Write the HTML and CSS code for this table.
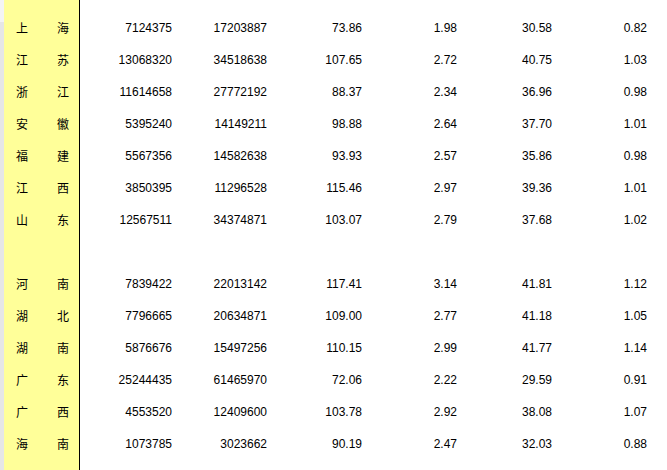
FILE: index.html
```html
<!DOCTYPE html>
<html lang="zh">
<head>
<meta charset="utf-8">
<title>Sheet</title>
<link rel="stylesheet" href="styles.css">
</head>
<body>
<div class="sheet">
  <div class="gutter"></div>
  <div class="names">
    <div class="name"><span>上</span><span>海</span></div>
    <div class="name"><span>江</span><span>苏</span></div>
    <div class="name"><span>浙</span><span>江</span></div>
    <div class="name"><span>安</span><span>徽</span></div>
    <div class="name"><span>福</span><span>建</span></div>
    <div class="name"><span>江</span><span>西</span></div>
    <div class="name"><span>山</span><span>东</span></div>
    <div class="name"></div>
    <div class="name"><span>河</span><span>南</span></div>
    <div class="name"><span>湖</span><span>北</span></div>
    <div class="name"><span>湖</span><span>南</span></div>
    <div class="name"><span>广</span><span>东</span></div>
    <div class="name"><span>广</span><span>西</span></div>
    <div class="name"><span>海</span><span>南</span></div>
  </div>
  <div class="data">
    <div class="row"><span>7124375</span><span>17203887</span><span>73.86</span><span>1.98</span><span>30.58</span><span>0.82</span></div>
    <div class="row"><span>13068320</span><span>34518638</span><span>107.65</span><span>2.72</span><span>40.75</span><span>1.03</span></div>
    <div class="row"><span>11614658</span><span>27772192</span><span>88.37</span><span>2.34</span><span>36.96</span><span>0.98</span></div>
    <div class="row"><span>5395240</span><span>14149211</span><span>98.88</span><span>2.64</span><span>37.70</span><span>1.01</span></div>
    <div class="row"><span>5567356</span><span>14582638</span><span>93.93</span><span>2.57</span><span>35.86</span><span>0.98</span></div>
    <div class="row"><span>3850395</span><span>11296528</span><span>115.46</span><span>2.97</span><span>39.36</span><span>1.01</span></div>
    <div class="row"><span>12567511</span><span>34374871</span><span>103.07</span><span>2.79</span><span>37.68</span><span>1.02</span></div>
    <div class="row"></div>
    <div class="row"><span>7839422</span><span>22013142</span><span>117.41</span><span>3.14</span><span>41.81</span><span>1.12</span></div>
    <div class="row"><span>7796665</span><span>20634871</span><span>109.00</span><span>2.77</span><span>41.18</span><span>1.05</span></div>
    <div class="row"><span>5876676</span><span>15497256</span><span>110.15</span><span>2.99</span><span>41.77</span><span>1.14</span></div>
    <div class="row"><span>25244435</span><span>61465970</span><span>72.06</span><span>2.22</span><span>29.59</span><span>0.91</span></div>
    <div class="row"><span>4553520</span><span>12409600</span><span>103.78</span><span>2.92</span><span>38.08</span><span>1.07</span></div>
    <div class="row"><span>1073785</span><span>3023662</span><span>90.19</span><span>2.47</span><span>32.03</span><span>0.88</span></div>
  </div>
</div>
</body>
</html>
```
FILE: styles.css
```css
html, body {
  margin: 0;
  padding: 0;
  background: #ffffff;
}
.sheet {
  display: flex;
  height: 470px;
  overflow: hidden;
  font-family: "Liberation Sans", Arial, "Noto Sans CJK SC", sans-serif;
  font-size: 12px;
  color: #000;
}
.gutter {
  width: 4px;
  flex: none;
  background: linear-gradient(#f4f4f4 0 22px, #e6e6e6 22px);
}
.names {
  width: 75px;
  flex: none;
  background: #ffff99;
  border-right: 1px solid #000;
  padding-top: 12px;
  box-sizing: border-box;
  width: 76px;
}
.name {
  height: 32px;
  display: flex;
  align-items: center;
  justify-content: space-between;
  padding: 0 10px 0 12px;
  font-family: "Noto Sans CJK SC", sans-serif;
  font-size: 12px;
  line-height: 1;
}
.data {
  padding-top: 12px;
}
.row {
  height: 32px;
  display: grid;
  grid-template-columns: repeat(6, 95px);
  align-items: center;
}
.row span {
  text-align: right;
  padding-right: 3px;
  line-height: 1;
}
```
